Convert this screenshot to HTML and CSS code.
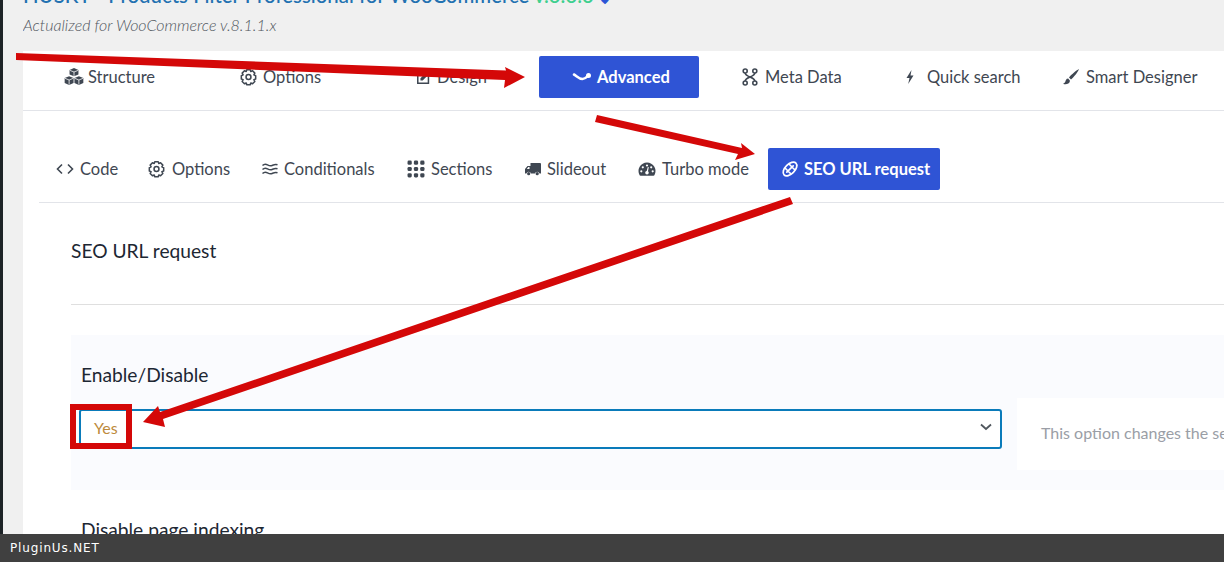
FILE: index.html
```html
<!DOCTYPE html>
<html lang="en">
<head>
<meta charset="utf-8">
<title>SEO URL request</title>
<link rel="stylesheet" href="styles.css">
</head>
<body>
<div class="app">
  <div class="adminbar"></div>
  <div class="wrap">
    <header class="head">
      <h1 class="title">HUSKY - Products Filter Professional for WooCommerce <span class="ver">v.3.3.3</span> <span class="mark">◆</span></h1>
      <p class="sub">Actualized for WooCommerce v.8.1.1.x</p>
    </header>
    <main class="panel">
      <nav class="nav">
        <a class="tab w-structure"><svg class="ic ic-cubes" viewBox="0 0 18 16"><path fill="#3f4752" d="M9 0l4 1.600v4.200L9 7.400 5 5.800V1.600zM4.600 7.400l4 1.600v4.400l-4 1.800-4-1.800V9zM13.400 7.400l4 1.600v4.400l-4 1.800-4-1.800V9z"/><path fill="none" stroke="#fff" stroke-width=".7" d="M5.200 2l3.800 1.500L12.800 2M9 3.500v3.600M.9 9.200l3.700 1.500 3.700-1.500M4.600 10.700v4.200M9.700 9.200l3.700 1.500 3.700-1.500M13.400 10.700v4.200"/></svg>Structure</a>
        <a class="tab w-options"><svg class="ic ic-cog" viewBox="0 0 18 18"><use href="#cog"/></svg>Options</a>
        <a class="tab w-design"><svg class="ic ic-design" viewBox="0 0 18 18"><path fill="none" stroke="#3f4752" stroke-width="1.700" d="M2 5h9M2 5v11h12V8"/><path fill="#3f4752" d="M5 10.500L11.500 4l2.500 2.500L7.500 13H5zM12.500 3l1-1 2.500 2.500-1 1z"/></svg>Design</a>
        <a class="btn w-advanced"><svg class="ic" viewBox="0 0 20 14"><path fill="none" stroke="#fff" stroke-width="2.600" stroke-linecap="round" d="M2 4.500c2.500 1.300 5 4.500 8.500 4.500 2.500 0 4-1.800 6-3.500"/><circle cx="16.500" cy="5.500" r="2.500" fill="#fff"/></svg>Advanced</a>
        <a class="tab w-meta"><svg class="ic ic-meta" viewBox="0 0 16 18"><g fill="none" stroke="#3f4752" stroke-width="1.600"><circle cx="3.200" cy="3" r="2"/><circle cx="12.800" cy="3" r="2"/><circle cx="3.200" cy="15" r="2"/><circle cx="12.800" cy="15" r="2"/><path d="M3.200 5c0 4 9.600 4 9.600 8M12.800 5c0 4-9.600 4-9.600 8"/></g></svg>Meta Data</a>
        <a class="tab w-quick"><svg class="ic ic-bolt" viewBox="0 0 10 16"><path fill="#3f4752" d="M6.500 1L1.500 9h3L3.200 15 8.500 6.500h-3z"/></svg>Quick search</a>
        <a class="tab"><svg class="ic ic-brush" viewBox="0 0 18 18"><path fill="#3f4752" d="M17 1c-3 1.500-7.500 5.500-10 8.500l2 2C12 9 16 4 17 1zM6.200 10.500C4 10.500 3.800 12.500 3.200 14c-.4.900-1.300 1.500-2.200 1.800 2 1 6.500.8 7-3z"/></svg>Smart Designer</a>
      </nav>
      <div class="inner">
        <nav class="subnav">
          <a class="tab w-code"><svg class="ic ic-code" viewBox="0 0 18 14"><path fill="none" stroke="#3f4752" stroke-width="1.600" d="M6 2.500L1.500 7 6 11.500M12 2.500L16.500 7 12 11.500"/></svg>Code</a>
          <a class="tab w-opt2"><svg class="ic ic-cog2" viewBox="0 0 18 18"><use href="#cog"/></svg>Options</a>
          <a class="tab w-cond"><svg class="ic ic-waves" viewBox="0 0 18 14"><g fill="none" stroke="#3f4752" stroke-width="1.500"><path d="M1.500 3.500c2-2 3.500-1.500 5-.7s3 1.300 4.500.7 3-1.500 5.500-.7"/><path d="M1.500 7.500c2-2 3.500-1.500 5-.7s3 1.300 4.500.7 3-1.500 5.500-.7M1.500 11.500c2-2 3.500-1.500 5-.7s3 1.300 4.500.7 3-1.500 5.500-.7"/></g></svg>Conditionals</a>
          <a class="tab w-sect"><svg class="ic" viewBox="0 0 17 17"><g fill="#3f4752"><rect x=".5" y=".5" width="4" height="4" rx="1.300"/><rect x="6.500" y=".5" width="4" height="4" rx="1.300"/><rect x="12.500" y=".5" width="4" height="4" rx="1.300"/><rect x=".5" y="6.500" width="4" height="4" rx="1.300"/><rect x="6.500" y="6.500" width="4" height="4" rx="1.300"/><rect x="12.500" y="6.500" width="4" height="4" rx="1.300"/><rect x=".5" y="12.500" width="4" height="4" rx="1.300"/><rect x="6.500" y="12.500" width="4" height="4" rx="1.300"/><rect x="12.500" y="12.500" width="4" height="4" rx="1.300"/></g></svg>Sections</a>
          <a class="tab w-slide"><svg class="ic ic-truck" viewBox="0 0 18 14"><path fill="#3f4752" d="M6.500 1H16a1 1 0 0 1 1 1v9.500h-1.500a2.400 2.400 0 0 0-4.600 0H7a2.400 2.400 0 0 0-4.600 0H1V7l2.500-3h3zM2.800 7H5.500V5H4.300z"/><circle cx="4.700" cy="11.700" r="1.600" fill="#3f4752"/><circle cx="13.200" cy="11.700" r="1.600" fill="#3f4752"/></svg>Slideout</a>
          <a class="tab w-turbo"><svg class="ic" viewBox="0 0 18 16"><path fill="#3f4752" d="M9 1.500a8.500 8.500 0 0 0-7.400 12.700c.2.300.5.500.9.500h13c.4 0 .7-.2.900-.5A8.500 8.500 0 0 0 9 1.500z"/><g fill="#fff"><circle cx="9" cy="4.500" r="1.100"/><circle cx="4.800" cy="6.300" r="1.100"/><circle cx="3.300" cy="10.300" r="1.100"/><circle cx="14.700" cy="10.300" r="1.100"/><circle cx="13.200" cy="6.300" r="1.100"/><circle cx="9" cy="11.800" r="1.800"/><path d="M8.300 11.500l1.500-5.500 1 .3-1.200 5.600z"/></g></svg>Turbo mode</a>
          <a class="btn w-seo"><svg class="ic ic-seo" viewBox="0 0 18 18"><g fill="none" stroke="#fff" stroke-width="1.700" stroke-linecap="round"><ellipse cx="9" cy="9" rx="8.400" ry="4.800" transform="rotate(-45 9 9)"/><path d="M5.800 12.200l6.400-6.400M4.500 8.500l5 5M8.500 4.500l5 5"/></g></svg>SEO URL request</a>
        </nav>
        <section class="content">
          <h2 class="sect-title">SEO URL request</h2>
          <div class="opt">
            <h3 class="opt-title">Enable/Disable</h3>
            <div class="opt-row">
              <div class="select"><span class="select-val">Yes</span><svg class="chev" viewBox="0 0 12 8"><path fill="none" stroke="#50575e" stroke-width="1.800" d="M1 1.500l5 4.500 5-4.500"/></svg></div>
              <div class="help">This option changes the se</div>
            </div>
          </div>
          <h3 class="opt-title next">Disable page indexing</h3>
        </section>
      </div>
    </main>
  </div>
</div>
<svg class="defs" width="0" height="0"><defs><g id="cog"><path fill="none" stroke="#3f4752" stroke-width="1.600" stroke-linejoin="round" d="M7.200 1.200h3.600l.6 2 1.900-.8 2.400 2.500-1 1.900 1.900.9v3.400l-1.900.7 1 2-2.400 2.400-1.900-.9-.6 2H7.200l-.6-2-1.900.9-2.400-2.400 1-2-1.900-.7V7.700l1.900-.9-1-1.900 2.400-2.500 1.900.8z"/><circle cx="9" cy="9" r="2.600" fill="none" stroke="#3f4752" stroke-width="1.600"/></g></defs></svg>
<svg class="arrows" viewBox="0 0 1224 562">
  <g fill="#d40808">
    <path d="M16 53L506 70.500 505 67 525 77 504 88 505 80 16 60z"/>
    <path d="M597 115L742 148 741 143 755 154 735 160 738 154 595 122z"/>
    <path d="M790 197L793 204 163 419 165 427 143 422 158 406 160 412z"/>
  </g>
  <rect class="hl" x="73" y="407" width="56" height="39"/>
</svg>
<footer class="foot">PluginUs.NET</footer>
</body>
</html>
```
FILE: styles.css
```css
* { box-sizing: border-box; }
html, body { margin: 0; height: 100%; overflow: hidden; }
body { font-family: "Lato", "Noto Sans", sans-serif; font-size: 16.5px; color: #3f4752; background: #f0f0f0; }
a { color: inherit; text-decoration: none; }
h1, h2, h3, p { margin: 0; font-weight: 400; }
.defs { position: absolute; }
.app { display: flex; height: 100vh; }
.adminbar { width: 3px; flex: none; background: #1d2327; }
.wrap { flex: 1; min-width: 0; display: flex; flex-direction: column; padding-left: 20px; }
.head { height: 51px; flex: none; overflow: hidden; display: flex; flex-direction: column; justify-content: flex-end; padding-bottom: 17px; }
.title { font-size: 20.400px; line-height: 24px; color: #2271b1; white-space: nowrap; font-weight: 500; }
.ver { color: #3ecf8e; }
.mark { font-size: 10px; color: #2b55d6; margin-left: 2px; }
.sub { font-size: 16px; line-height: 18px; font-style: italic; font-weight: 300; color: #50575e; margin-top: 5px; }
.panel { flex: 1; background: #fff; min-height: 0; }
.nav { height: 60px; display: flex; align-items: center; padding: 0 0 8px 41px; border-bottom: 1px solid #e2e4e9; }
.tab { display: flex; align-items: center; white-space: nowrap; flex: none; }
.btn { display: flex; align-items: center; height: 42px; border-radius: 2px; background: #2f54d5; color: #fff; font-weight: 700; white-space: nowrap; flex: none; }
.ic { width: 18px; height: 18px; flex: none; margin-right: 6px; display: block; }
.ic-cubes { width: 20px; margin-right: 4px; }
.ic-cog { width: 17px; margin-right: 6px; }
.ic-design { width: 16px; margin-right: 5px; }
.w-structure { width: 176px; }
.w-options { width: 176px; }
.w-design { width: 123px; }
.w-advanced { width: 160px; margin-right: 43px; padding-left: 33px; }
.w-advanced .ic { width: 20px; height: 14px; margin-right: 5px; }
.w-meta { width: 163px; }
.ic-meta { width: 16px; margin-right: 7px; }
.w-quick { width: 157px; }
.ic-bolt { width: 10px; height: 16px; margin-right: 12px; }
.inner { padding: 37px 0 0 16px; }
.subnav { height: 55px; padding: 0 0 12px 17px; display: flex; align-items: center; border-bottom: 1px solid #e2e4e9; }
.w-code { width: 92px; }
.w-opt2 { width: 113px; }
.ic-cog2 { width: 17px; margin-right: 7px; }
.w-cond { width: 146px; }
.ic-waves { margin-right: 5px; }
.w-sect { width: 117px; }
.w-slide { width: 114px; }
.ic-truck { margin-right: 5px; }
.w-turbo { width: 130px; }
.w-seo { width: 172px; padding-left: 13px; }
.ic-seo { margin-right: 5px; }
.content { padding-left: 32px; }
.sect-title { font-size: 19.200px; line-height: 24px; color: #1d2733; padding: 36px 0 41px; border-bottom: 1px solid #dfdfdf; }
.opt { margin-top: 30px; height: 155px; background: #fafbfe; padding: 28px 0 0 10px; }
.opt-title { font-size: 19.200px; line-height: 24px; color: #1d2733; }
.opt-row { display: flex; margin: 11px 0 0 -2px; align-items: flex-start; position: relative; }
.select { width: 923px; height: 40px; flex: none; margin-top: 11px; background: #fff; border: 2px solid #0a7bba; border-radius: 3px; display: flex; align-items: center; justify-content: space-between; padding: 0 8px 4px 13px; }
.select-val { color: #bd8a3c; font-size: 16px; }
.chev { width: 12px; height: 8px; }
.help { margin-left: 15px; height: 72px; width: 400px; flex: none; background: #fff; color: #9a9ea6; padding: 25px 0 0 24px; font-size: 16px; line-height: 20px; white-space: nowrap; }
.next { padding: 28px 0 0 10px; }
.arrows { position: absolute; left: 0; top: 0; width: 1224px; height: 562px; pointer-events: none; }
.hl { fill: none; stroke: #d40808; stroke-width: 6px; }
.foot { position: absolute; left: 0; right: 0; bottom: 0; height: 28px; background: #404040; color: #fff; font-family: "DejaVu Sans", sans-serif; font-size: 12px; line-height: 28px; padding-left: 10px; letter-spacing: .85px; }
```
